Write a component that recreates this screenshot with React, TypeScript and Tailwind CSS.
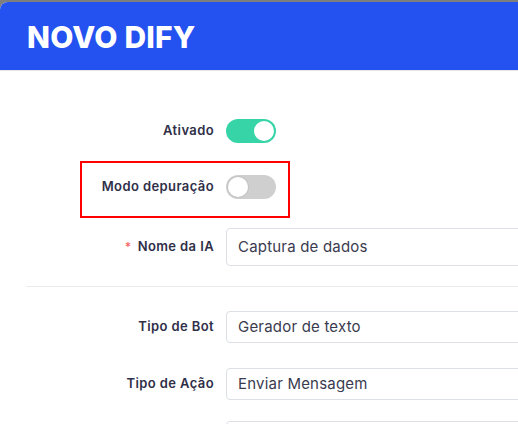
const font = { fontFamily: 'Inter, "Open Sans", sans-serif' }

function Toggle({ on }: { on: boolean }) {
  return (
    <div
      className={`relative w-[50px] h-[24px] rounded-full shrink-0 ${
        on ? 'bg-[#37d4a8]' : 'bg-[#cfcfcf]'
      }`}
    >
      <div
        className={`absolute top-[2px] w-[20px] h-[20px] rounded-full bg-white ${
          on ? 'right-[2px]' : 'left-[2px] ring-1 ring-[#c4c4c4]'
        }`}
      />
    </div>
  )
}

function Label({ children, required }: { children: string; required?: boolean }) {
  return (
    <div className="w-[200px] shrink-0 pr-[12px] flex justify-end items-center text-[13px] font-semibold tracking-[0.4px] text-[#2f2f48]">
      {required && <span className="text-[#f56c6c] mr-[6px] text-[12px]">*</span>}
      {children}
    </div>
  )
}

function Field({ value, tall }: { value: string; tall?: boolean }) {
  return (
    <div
      className={`w-[320px] shrink-0 border border-[#dcdfe6] rounded-[4px] flex items-center pl-[11px] text-[15px] tracking-[0.2px] text-[#3b3b4f] ${
        tall ? 'h-[38px]' : 'h-[32px]'
      }`}
    >
      {value}
    </div>
  )
}

export default function App() {
  return (
    <div className="w-[518px] h-[424px] overflow-hidden bg-[#7f7f7f] pt-[2px]" style={font}>
      <div className="bg-white rounded-tl-[8px] overflow-hidden h-full">
        <div className="h-[69px] bg-[#2452f0] border-b border-[#e6e6e6] flex items-center pl-[27px] pt-[2px]">
          <h1 className="text-[30px] font-extrabold text-white tracking-[0.2px]">NOVO DIFY</h1>
        </div>

        <div className="pl-[26px]">
          <div className="flex mt-[48px]">
            <Label>Ativado</Label>
            <Toggle on />
          </div>

          <div className="relative flex mt-[32px]">
            <div className="absolute left-[54px] top-[-14px] w-[210px] h-[57px] border-2 border-[#ff0000]" />
            <Label>Modo depuração</Label>
            <Toggle on={false} />
          </div>

          <div className="flex mt-[29px]">
            <Label required>Nome da IA</Label>
            <Field value="Captura de dados" tall />
          </div>

          <div className="mt-[20px] h-px bg-[#ebebeb]" />

          <div className="flex mt-[24px]">
            <Label>Tipo de Bot</Label>
            <Field value="Gerador de texto" />
          </div>

          <div className="flex mt-[25px]">
            <Label>Tipo de Ação</Label>
            <Field value="Enviar Mensagem" />
          </div>

          <div className="flex mt-[21px]">
            <Label>{''}</Label>
            <Field value="" />
          </div>
        </div>
      </div>
    </div>
  )
}
